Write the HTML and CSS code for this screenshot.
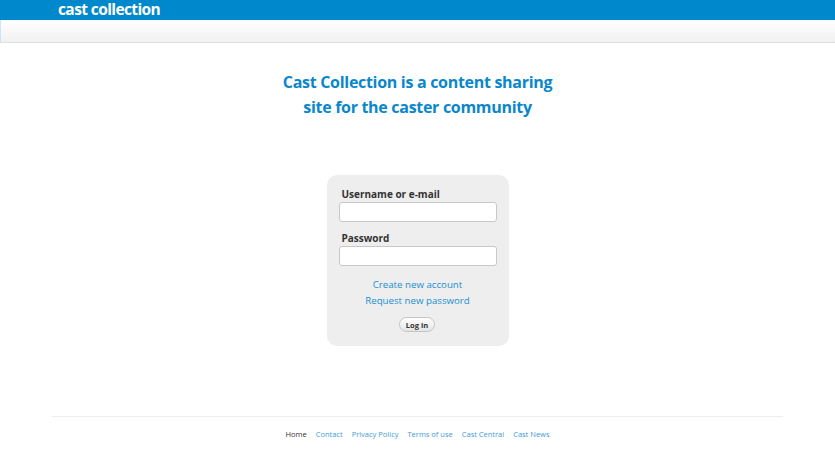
FILE: index.html
```html
<!DOCTYPE html>
<html lang="en">
<head>
    <meta charset="UTF-8">
    <title>Cast Collection</title>
    <link rel="stylesheet" href="styles.css">
</head>
<body>
    <div class="topbar">
        <div class="wrap">
            <a class="logo" href="#">cast collection</a>
        </div>
    </div>
    <div class="subbar"></div>

    <div class="wrap main">
        <h1 class="tagline">Cast Collection is a content sharing<br>site for the caster community</h1>

        <form class="login">
            <label for="name">Username or e-mail</label>
            <input type="text" id="name">
            <label for="pass">Password</label>
            <input type="password" id="pass">
            <div class="links">
                <a href="#">Create new account</a>
                <a href="#">Request new password</a>
            </div>
            <button type="button">Log in</button>
        </form>

        <div class="footer">
            <a href="#" class="active">Home</a>
            <a href="#">Contact</a>
            <a href="#">Privacy Policy</a>
            <a href="#">Terms of use</a>
            <a href="#">Cast Central</a>
            <a href="#">Cast News</a>
        </div>
    </div>
</body>
</html>
```

FILE: styles.css
```css
body {
    margin: 0;
    font-family: "Open Sans", Arial, sans-serif;
    background-color: white;
    color: #333;
}
a {
    color: #1b8fd0;
    text-decoration: none;
}
.wrap {
    width: 731px;
    margin: 0 auto;
}
.topbar {
    background-color: #0088cc;
    height: 20px;
}
.logo {
    display: block;
    padding-left: 6px;
    color: white;
    font-weight: 700;
    font-size: 15.5px;
    line-height: 19px;
    letter-spacing: -0.6px;
}
.subbar {
    height: 22px;
    background: linear-gradient(#ffffff, #f1f1f1);
    border-bottom: 1px solid #dedede;
    border-left: 1px solid #cde6f4;
}
.main {
    display: flex;
    flex-direction: column;
    align-items: center;
}
.tagline {
    margin: 27px 0 0;
    color: #0a87cb;
    font-size: 16px;
    font-weight: 700;
    line-height: 25px;
    text-align: center;
    letter-spacing: -0.3px;
}
.login {
    margin-top: 55px;
    width: 182px;
    box-sizing: border-box;
    padding: 12px 12px 14px 12px;
    background-color: #eeeeee;
    border-radius: 10px;
    display: flex;
    flex-direction: column;
}
.login label {
    font-size: 10px;
    font-weight: 700;
    color: #333;
    padding-left: 3px;
    line-height: 14px;
}
.login input {
    width: 158px;
    height: 20px;
    box-sizing: border-box;
    margin: 1px 0 9px;
    border: 1px solid #c8c8c8;
    border-radius: 3px;
    background: white;
}
.links {
    display: flex;
    flex-direction: column;
    align-items: center;
    font-size: 9.7px;
    line-height: 16px;
    margin-top: 2px;
}
.login button {
    align-self: center;
    margin-top: 8px;
    margin-left: -1px;
    font-family: "Open Sans", Arial, sans-serif;
    font-size: 7.5px;
    font-weight: 700;
    color: #333;
    padding: 1px 6px;
    height: 15px;
    border: 1px solid #c4c4c4;
    border-radius: 8px;
    background: linear-gradient(#ffffff, #e4e4e4);
}
.footer {
    align-self: stretch;
    margin-top: 70px;
    border-top: 1px solid #ececec;
    padding-top: 10px;
    display: flex;
    justify-content: center;
    gap: 9px;
    font-size: 7.5px;
    line-height: 14px;
}
.footer a {
    color: #3f9bd8;
}
.footer a.active {
    color: #333;
}
```
